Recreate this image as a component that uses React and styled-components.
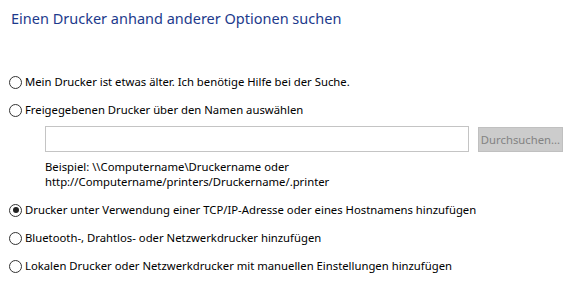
import * as React from "react";
import styled, { createGlobalStyle } from "styled-components";

const GlobalStyle = createGlobalStyle`
  html, body {
    margin: 0;
    padding: 0;
    background: #ffffff;
  }
  body {
    font-family: "Noto Sans", "Open Sans", sans-serif;
  }
`;

const options = [
  { id: "old", text: "Mein Drucker ist etwas älter. Ich benötige Hilfe bei der Suche." },
  { id: "shared", text: "Freigegebenen Drucker über den Namen auswählen", withInput: true },
  { id: "tcp", text: "Drucker unter Verwendung einer TCP/IP-Adresse oder eines Hostnamens hinzufügen", checked: true },
  { id: "bt", text: "Bluetooth-, Drahtlos- oder Netzwerkdrucker hinzufügen" },
  { id: "local", text: "Lokalen Drucker oder Netzwerkdrucker mit manuellen Einstellungen hinzufügen" },
];

function App() {
  return (
    <Page>
      <GlobalStyle />
      <Title>Einen Drucker anhand anderer Optionen suchen</Title>
      <OptionList>
        {options.map((opt) => (
          <OptionBlock key={opt.id}>
            <OptionRow>
              <Radio checked={opt.checked} />
              <Label>{opt.text}</Label>
            </OptionRow>
            {opt.withInput && (
              <SharedBox>
                <InputRow>
                  <TextInput />
                  <BrowseButton>Durchsuchen...</BrowseButton>
                </InputRow>
                <Hint>
                  Beispiel: \\Computername\Druckername oder
                  <br />
                  http://Computername/printers/Druckername/.printer
                </Hint>
              </SharedBox>
            )}
          </OptionBlock>
        ))}
      </OptionList>
    </Page>
  );
}

const Page = styled.div`
  width: 574px;
  height: 300px;
  box-sizing: border-box;
  padding: 8px 0 0 11px;
  color: #000000;
`;

const Title = styled.h1`
  margin: 0;
  font-family: "Noto Sans", "Open Sans", sans-serif;
  font-weight: 400;
  font-size: 14.5px;
  line-height: 20px;
  color: #1c3a8c;
`;

const OptionList = styled.div`
  display: flex;
  flex-direction: column;
  margin: 46px 0 0 -2px;
  gap: 12px;
`;

const OptionBlock = styled.div`
  display: flex;
  flex-direction: column;
`;

const OptionRow = styled.div`
  display: flex;
  align-items: center;
  gap: 3px;
  height: 16px;
`;

const Radio = styled.span`
  width: 11px;
  height: 11px;
  border: 1px solid #333333;
  border-radius: 50%;
  background: #ffffff;
  position: relative;
  flex: none;

  &::after {
    content: "";
    display: ${(p) => (p.checked ? "block" : "none")};
    position: absolute;
    left: 2.5px;
    top: 2.5px;
    width: 6px;
    height: 6px;
    border-radius: 50%;
    background: #222222;
  }
`;

const Label = styled.span`
  font-size: 11.3px;
  line-height: 16px;
  white-space: nowrap;
`;

const SharedBox = styled.div`
  display: flex;
  flex-direction: column;
  padding: 8px 0 1px 36px;
`;

const InputRow = styled.div`
  display: flex;
  align-items: center;
  gap: 9px;
`;

const TextInput = styled.div`
  width: 422px;
  height: 24px;
  border: 1px solid #c4c4c4;
  background: #ffffff;
`;

const BrowseButton = styled.div`
  width: 85px;
  height: 25px;
  box-sizing: border-box;
  background: #cccccc;
  border: 1px solid #c0c0c0;
  color: #838383;
  font-size: 11.3px;
  line-height: 23px;
  text-align: center;
`;

const Hint = styled.div`
  margin-top: 7px;
  font-size: 11.3px;
  line-height: 15px;
  white-space: nowrap;
`;

export default App;
